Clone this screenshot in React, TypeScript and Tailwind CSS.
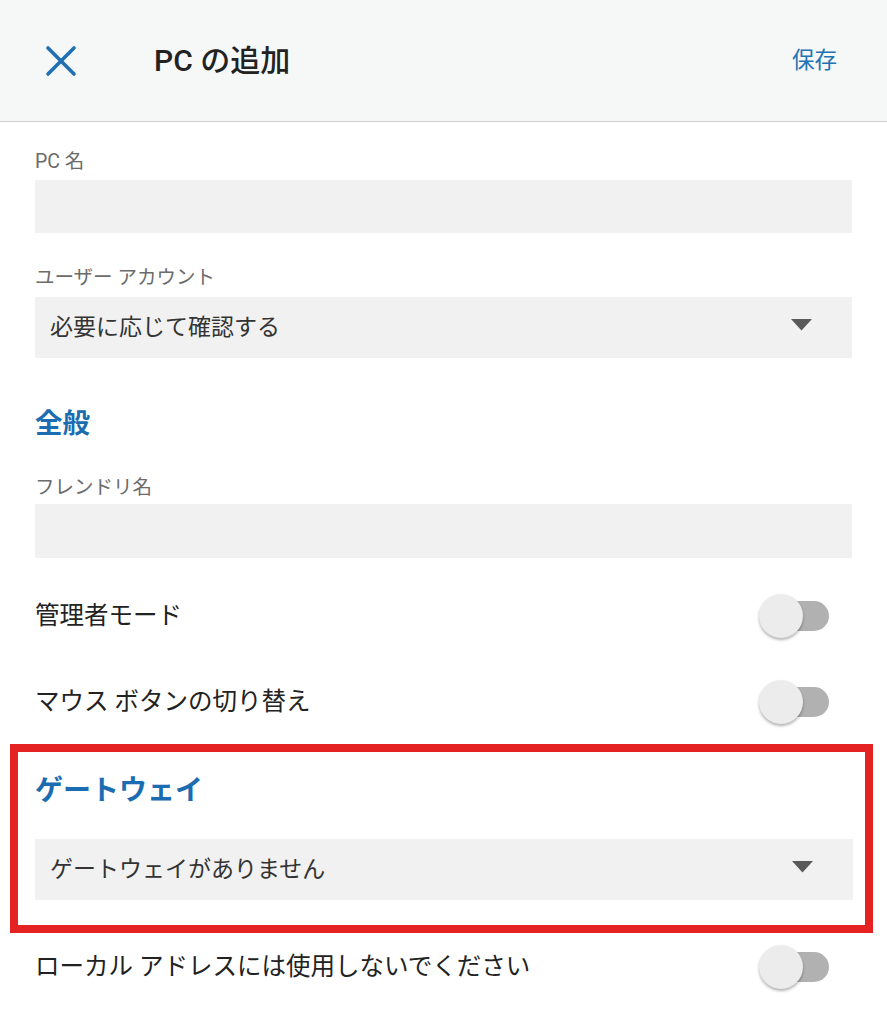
import React from 'react';

const FONT = "font-['Roboto','Noto_Sans_CJK_JP',sans-serif]";

const Toggle: React.FC = () => (
  <div className="relative w-[70px] h-[44px] flex items-center">
    <div className="ml-[21px] w-[49px] h-[30px] rounded-full bg-[#b1b1b1]" />
    <div className="absolute left-0 top-0 w-[44px] h-[44px] rounded-full bg-[#ececec] shadow-[0_2px_3px_rgba(0,0,0,0.3)]" />
  </div>
);

const Caret: React.FC = () => (
  <svg width="21" height="12" viewBox="0 0 21 12">
    <polygon points="0,0 21,0 10.5,11.5" fill="#5a5a5a" />
  </svg>
);

const Label: React.FC<{ text: string; className?: string }> = ({ text, className }) => (
  <div className={`text-[19.5px] leading-[24px] text-[#6b6b6b] ${className ?? ''}`}>{text}</div>
);

const Select: React.FC<{ value: string; className?: string }> = ({ value, className }) => (
  <div className={`h-[61px] bg-[#f1f1f1] flex items-center justify-between pl-[15px] pr-[40px] ${className ?? ''}`}>
    <span className="text-[23px] text-[#333] pt-[2px]">{value}</span>
    <div className="-mt-[6px]">
      <Caret />
    </div>
  </div>
);

const SwitchRow: React.FC<{ text: string; className?: string }> = ({ text, className }) => (
  <div className={`flex items-center justify-between pr-[23px] ${className ?? ''}`}>
    <span className="text-[24.5px] text-[#222]">{text}</span>
    <Toggle />
  </div>
);

export default function App() {
  return (
    <div className={`w-[887px] h-[1024px] bg-white overflow-hidden ${FONT}`}>
      <header className="h-[122px] bg-[#f6f7f7] border-b border-[#cdcdcd] flex items-center">
        <button className="ml-[44px] w-[34px] h-[34px] flex items-center justify-center">
          <svg width="32" height="32" viewBox="0 0 32 32">
            <path d="M3 3 L29 29 M29 3 L3 29" stroke="#1f6fb2" strokeWidth="3.6" strokeLinecap="round" />
          </svg>
        </button>
        <h1 className="ml-[76px] text-[30px] text-[#222] font-medium">PC の追加</h1>
        <span className="ml-auto mr-[50px] text-[22.5px] text-[#2273b4]">保存</span>
      </header>

      <main className="px-[35px]">
        <Label text="PC 名" className="mt-[28px]" />
        <div className="mt-[6px] h-[53px] bg-[#f1f1f1]" />

        <Label text="ユーザー アカウント" className="mt-[33px]" />
        <Select value="必要に応じて確認する" className="mt-[7px]" />

        <h2 className="mt-[48px] text-[27.5px] leading-[36px] font-bold text-[#1b6cb0]">全般</h2>

        <Label text="フレンドリ名" className="mt-[34px]" />
        <div className="mt-[4px] h-[54px] bg-[#f1f1f1]" />

        <SwitchRow text="管理者モード" className="mt-[36px]" />
        <SwitchRow text="マウス ボタンの切り替え" className="mt-[42px]" />
      </main>

      <section className="ml-[10px] mr-[14px] mt-[20px] h-[189px] border-[8px] border-[#e52222] pl-[17px] pr-[12px] pt-[21px]">
        <h2 className="text-[28px] leading-[36px] font-bold text-[#1b6cb0]">ゲートウェイ</h2>
        <Select value="ゲートウェイがありません" className="mt-[30px]" />
      </section>

      <div className="px-[35px]">
        <SwitchRow text="ローカル アドレスには使用しないでください" className="mt-[12px]" />
      </div>
    </div>
  );
}
